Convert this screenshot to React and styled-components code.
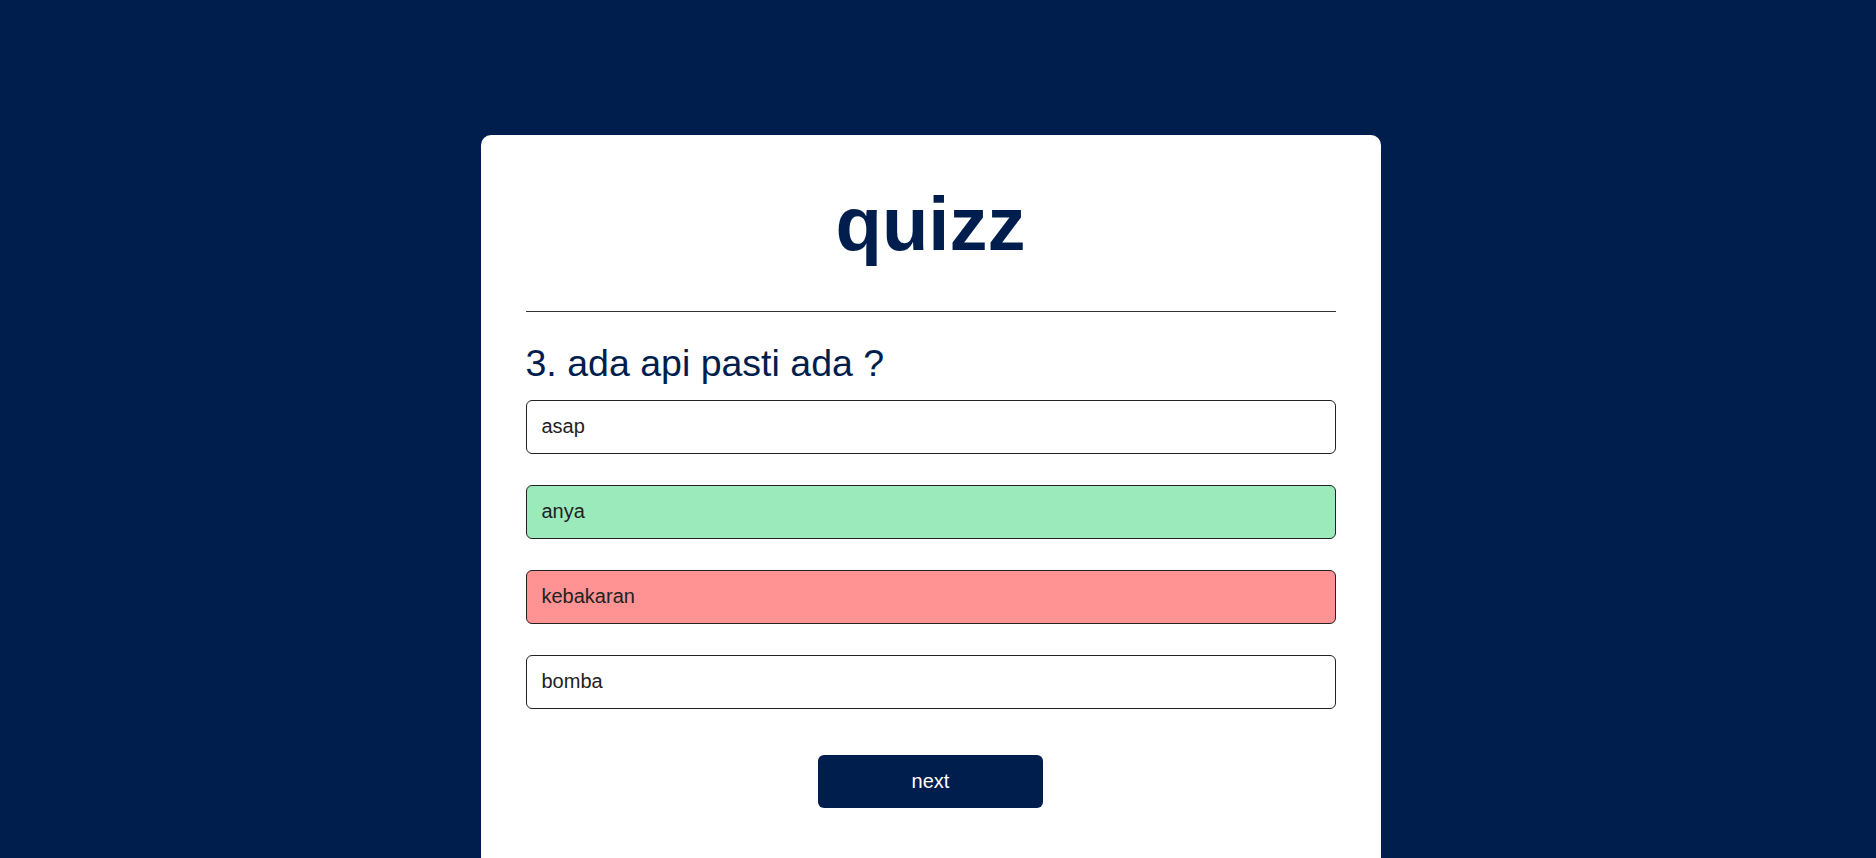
import React from "react"
import styled, { createGlobalStyle } from "styled-components"

const navy = "#001e4d"

const GlobalStyle = createGlobalStyle`
  * {
    box-sizing: border-box;
  }
  body {
    margin: 0;
    background: ${navy};
    font-family: "Liberation Sans", Arial, sans-serif;
  }
`

const Page = styled.div`
  display: flex;
  justify-content: center;
  padding: 135px 15px 0 0;
`

const Card = styled.div`
  width: 900px;
  background: #fff;
  border-radius: 10px;
  padding: 45px 45px 60px;
`

const Title = styled.h1`
  margin: 0;
  padding-bottom: 44px;
  border-bottom: 1px solid #333;
  text-align: center;
  font-size: 76px;
  font-weight: 700;
  color: ${navy};
`

const Question = styled.h2`
  margin: 30px 0 14.5px;
  font-size: 37.5px;
  font-weight: 400;
  color: ${navy};
`

const Answers = styled.div`
  display: flex;
  flex-direction: column;
  gap: 31px;
`

const answerBg = {
  correct: "#9aeabc",
  incorrect: "#ff9393",
}

const Answer = styled.button`
  display: block;
  width: 100%;
  padding: 14.5px 15px;
  border: 1px solid #222;
  border-radius: 6px;
  background: ${p => answerBg[p.$state] || "#fff"};
  color: #222;
  font-family: inherit;
  font-size: 20px;
  text-align: left;
  cursor: pointer;
`

const NextButton = styled.button`
  display: block;
  width: 225px;
  margin: 46px auto 0;
  padding: 15px;
  border: 0;
  border-radius: 6px;
  background: ${navy};
  color: #fff;
  font-family: inherit;
  font-size: 20px;
  cursor: pointer;
`

const answers = [
  { text: "asap" },
  { text: "anya", state: "correct" },
  { text: "kebakaran", state: "incorrect" },
  { text: "bomba" },
]

export default function App() {
  return (
    <Page>
      <GlobalStyle />
      <Card>
        <Title>quizz</Title>
        <Question>3. ada api pasti ada ?</Question>
        <Answers>
          {answers.map(a => (
            <Answer key={a.text} $state={a.state}>
              {a.text}
            </Answer>
          ))}
        </Answers>
        <NextButton>next</NextButton>
      </Card>
    </Page>
  )
}
